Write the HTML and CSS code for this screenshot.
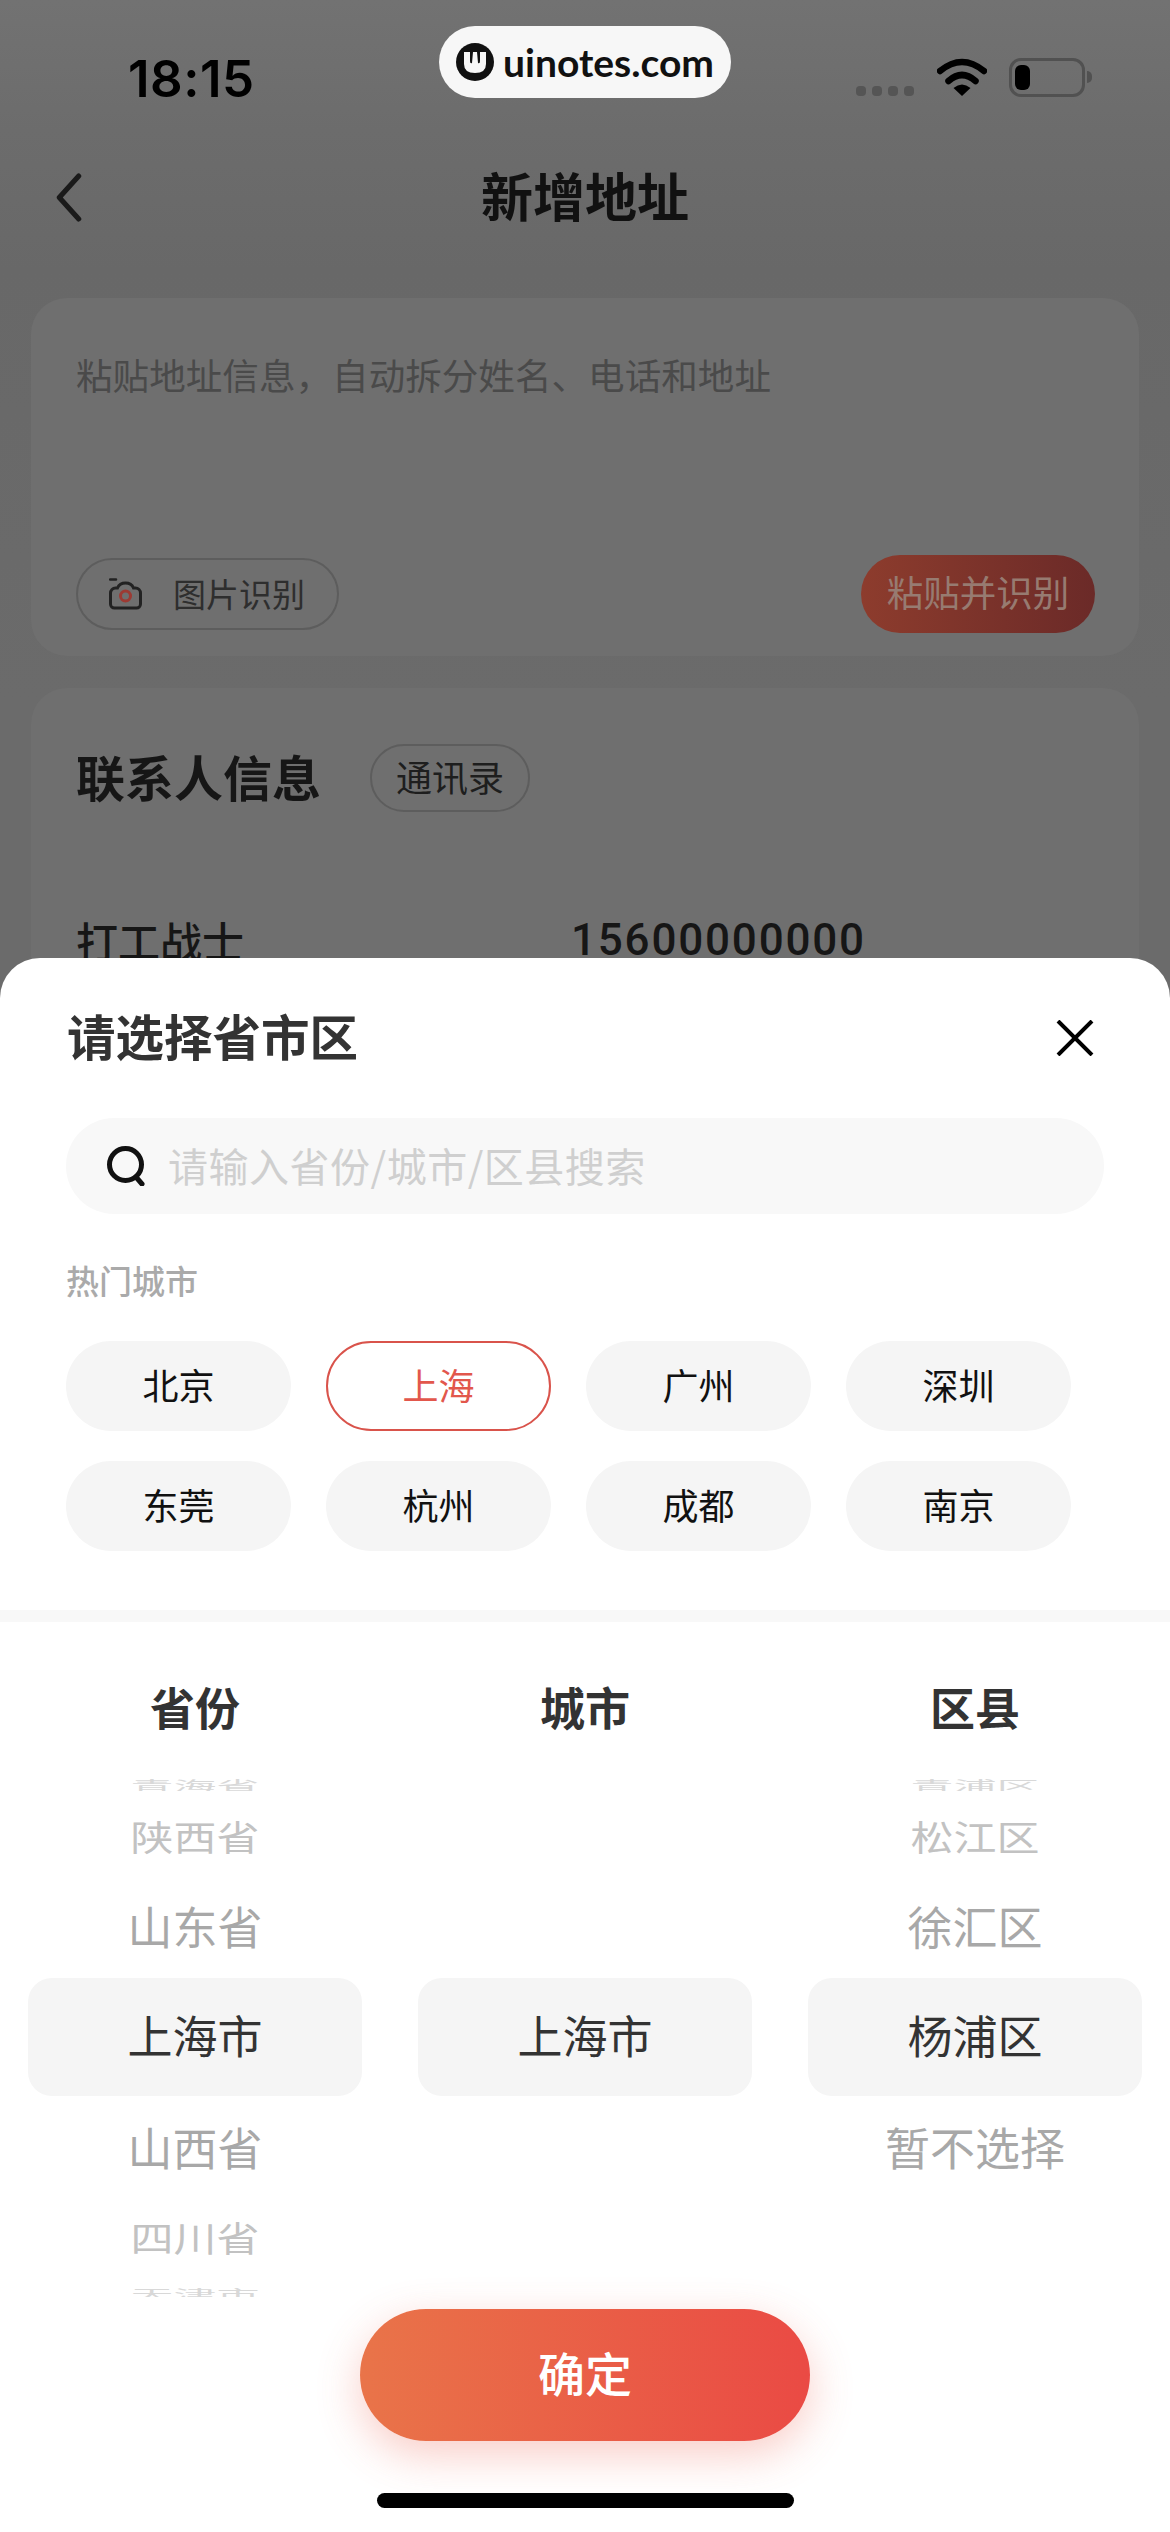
FILE: index.html
```html
<!DOCTYPE html>
<html lang="zh-CN">
<head>
    <meta charset="UTF-8">
    <meta name="viewport" content="width=device-width, initial-scale=1.0">
    <title>新增地址</title>
    <link rel="stylesheet" href="styles.css">
</head>
<body>
    <div class="page">
        <!-- Dimmed page behind the sheet -->
        <div class="status">
            <span class="time">18:15</span>
            <div class="status-icons">
                <div class="signal"><i></i><i></i><i></i><i></i></div>
                <svg class="wifi" viewBox="0 0 50 38">
                    <path d="M3 13 Q25 -5 47 13" fill="none" stroke="#000" stroke-width="6.5" stroke-linecap="round"/>
                    <path d="M11.5 23 Q25 11 38.5 23" fill="none" stroke="#000" stroke-width="6.5" stroke-linecap="round"/>
                    <path d="M16.5 30 Q25 23 33.5 30 L25 38 Z" fill="#000"/>
                </svg>
                <div class="battery"><div class="battery-level"></div></div>
                <div class="battery-nub"></div>
            </div>
        </div>

        <div class="watermark">
            <svg class="watermark-logo" viewBox="0 0 38 38">
                <circle cx="19" cy="19" r="19" fill="#111"/>
                <path d="M8 9 h6 v9 q0 3 2 2 l1 -11 h4 l1 11 q2 1 2 -2 v-9 h6 v12 q0 9 -11 9 q-11 0 -11 -9 z" fill="#f7f7f7"/>
            </svg>
            <span>uinotes.com</span>
        </div>

        <div class="nav">
            <svg class="back" viewBox="0 0 26 48">
                <path d="M23 3 L4 24 L23 45" fill="none" stroke="#1a1a1a" stroke-width="5" stroke-linecap="round" stroke-linejoin="round"/>
            </svg>
            <h1>新增地址</h1>
        </div>

        <div class="card paste-card">
            <p class="paste-hint">粘贴地址信息，自动拆分姓名、电话和地址</p>
            <div class="paste-actions">
                <div class="image-btn">
                    <svg class="camera" viewBox="0 0 33 32">
                        <path d="M1 1.5h6" fill="none" stroke="#222" stroke-width="2.5" stroke-linecap="round"/>
                        <path d="M1.5 15 a5 5 0 0 1 5 -5 h2 a8.5 7.5 0 0 1 16 0 h2 a5 5 0 0 1 5 5 v11 a4 4 0 0 1 -4 4 h-22 a4 4 0 0 1 -4 -4 z" fill="none" stroke="#222" stroke-width="3"/>
                        <circle cx="16.5" cy="18" r="5" fill="none" stroke="#9c3a33" stroke-width="3"/>
                    </svg>
                    <span>图片识别</span>
                </div>
                <div class="paste-btn">粘贴并识别</div>
            </div>
        </div>

        <div class="card contact-card">
            <div class="contact-title">
                <h2>联系人信息</h2>
                <span class="book-btn">通讯录</span>
            </div>
            <div class="contact-row">
                <span class="contact-name">打工战士</span>
                <span class="contact-phone">15600000000</span>
            </div>
        </div>

        <!-- Region picker sheet -->
        <div class="sheet">
            <div class="sheet-head">
                <h3>请选择省市区</h3>
                <svg class="close" viewBox="0 0 38 36">
                    <path d="M2 1 L36 35 M36 1 L2 35" fill="none" stroke="#000" stroke-width="4"/>
                </svg>
            </div>

            <div class="search">
                <svg class="search-icon" viewBox="0 0 38 40">
                    <circle cx="18.5" cy="18.5" r="16" fill="none" stroke="#111" stroke-width="5"/>
                    <path d="M29 31 L35 38" fill="none" stroke="#111" stroke-width="5" stroke-linecap="round"/>
                </svg>
                <span>请输入省份/城市/区县搜索</span>
            </div>

            <div class="hot-label">热门城市</div>
            <div class="hot-grid">
                <div class="chip">北京</div>
                <div class="chip chip-active">上海</div>
                <div class="chip">广州</div>
                <div class="chip">深圳</div>
                <div class="chip">东莞</div>
                <div class="chip">杭州</div>
                <div class="chip">成都</div>
                <div class="chip">南京</div>
            </div>

            <div class="divider"></div>

            <div class="picker-head">
                <div>省份</div>
                <div>城市</div>
                <div>区县</div>
            </div>

            <div class="picker">
                <div class="wheel">
                    <div class="row row-edge"><span>青海省</span></div>
                    <div class="row row-far"><span>陕西省</span></div>
                    <div class="row row-near row-up"><span>山东省</span></div>
                    <div class="row row-selected"><span>上海市</span></div>
                    <div class="row row-near"><span>山西省</span></div>
                    <div class="row row-far"><span>四川省</span></div>
                    <div class="row row-edge row-bottom"><span>天津市</span></div>
                </div>
                <div class="wheel">
                    <div class="row row-edge"></div>
                    <div class="row row-far"></div>
                    <div class="row row-near row-up"></div>
                    <div class="row row-selected"><span>上海市</span></div>
                    <div class="row row-near"></div>
                    <div class="row row-far"></div>
                    <div class="row row-edge row-bottom"></div>
                </div>
                <div class="wheel">
                    <div class="row row-edge"><span>青浦区</span></div>
                    <div class="row row-far"><span>松江区</span></div>
                    <div class="row row-near row-up"><span>徐汇区</span></div>
                    <div class="row row-selected"><span>杨浦区</span></div>
                    <div class="row row-near"><span>暂不选择</span></div>
                    <div class="row row-far"></div>
                    <div class="row row-edge row-bottom"></div>
                </div>
            </div>

            <div class="confirm">确定</div>
            <div class="home-bar"></div>
        </div>
    </div>
</body>
</html>
```

FILE: styles.css
```css
* {
    box-sizing: border-box;
}

body {
    margin: 0;
    font-family: "Noto Sans CJK SC", "Noto Sans", sans-serif;
    background-color: #696969;
}

h1, h2, h3, p {
    margin: 0;
}

.page {
    position: relative;
    width: 1170px;
    height: 2532px;
    overflow: hidden;
    padding: 0 31px;
    background: linear-gradient(#727272 0, #6c6c6c 130px, #686868 270px, #6b6b6b 700px);
}

/* Status bar */
.status {
    display: flex;
    justify-content: space-between;
    align-items: flex-start;
    height: 150px;
    padding: 54px 47px 0 97px;
}

.time {
    font-family: Inter, "Liberation Sans", sans-serif;
    font-size: 51px;
    line-height: 50px;
    font-weight: 600;
    letter-spacing: 0.5px;
    color: #000;
}

.status-icons {
    display: flex;
    align-items: flex-start;
    padding-top: 4px;
}

.signal {
    display: flex;
    gap: 6px;
    margin-top: 28px;
    margin-right: 23px;
}

.signal i {
    display: block;
    width: 10px;
    height: 10px;
    border-radius: 4px;
    background-color: #555;
}

.wifi {
    width: 50px;
    height: 38px;
    margin-right: 22px;
}

.battery {
    width: 76px;
    height: 39px;
    padding: 4px 3px;
    border: 3px solid #515151;
    border-radius: 12px;
}

.battery-level {
    width: 15px;
    height: 100%;
    border-radius: 6px;
    background-color: #000;
}

.battery-nub {
    width: 5px;
    height: 12px;
    margin: 13px 0 0 2px;
    border-radius: 0 6px 6px 0;
    background-color: #515151;
}

.watermark {
    position: absolute;
    top: 26px;
    left: 439px;
    display: flex;
    align-items: center;
    width: 292px;
    height: 72px;
    padding-left: 17px;
    border-radius: 36px;
    background-color: #f7f7f7;
    font-family: Lato, "Noto Sans", sans-serif;
    font-size: 39px;
    font-weight: 700;
    color: #111;
}

.watermark-logo {
    width: 38px;
    height: 38px;
    margin-right: 9px;
}

/* Nav */
.nav {
    position: relative;
    display: flex;
    justify-content: center;
    align-items: center;
    height: 94px;
}

.nav h1 {
    margin-bottom: 5px;
    font-size: 52px;
    line-height: 89px;
    font-weight: 700;
    color: #111;
}

.back {
    position: absolute;
    left: 24px;
    top: 23px;
    width: 27px;
    height: 49px;
}

/* Cards */
.card {
    border-radius: 36px;
    background-color: #6f6f6f;
    padding-left: 45px;
}

.paste-card {
    display: flex;
    flex-direction: column;
    justify-content: space-between;
    height: 358px;
    margin-top: 54px;
    padding: 53px 44px 23px 45px;
}

.paste-hint {
    font-size: 36.6px;
    line-height: 48px;
    color: #4a4a4a;
}

.paste-actions {
    display: flex;
    justify-content: space-between;
    align-items: center;
}

.image-btn {
    display: flex;
    align-items: center;
    width: 263px;
    height: 72px;
    padding-left: 31px;
    border: 2px solid #5d5d5d;
    border-radius: 36px;
    font-size: 33px;
    color: #2e2e2e;
}

.image-btn span {
    margin-bottom: 3px;
}

.camera {
    width: 33px;
    height: 32px;
    margin-right: 31px;
}

.paste-btn {
    width: 234px;
    height: 78px;
    border-radius: 39px;
    background: linear-gradient(90deg, #8d3c2d, #6b2a28);
    font-size: 36.5px;
    line-height: 74px;
    text-align: center;
    color: #977b71;
}

.contact-card {
    height: 500px;
    margin-top: 32px;
    padding-top: 56px;
}

.contact-title {
    display: flex;
    align-items: center;
    gap: 49px;
}

.contact-title h2 {
    margin-bottom: 4px;
    font-size: 49px;
    line-height: 64px;
    font-weight: 700;
    color: #161616;
}

.book-btn {
    width: 160px;
    height: 68px;
    border: 2px solid #5d5d5d;
    border-radius: 34px;
    font-size: 36px;
    line-height: 60px;
    text-align: center;
    color: #1e1e1e;
}

.contact-row {
    display: flex;
    margin-top: 100px;
    font-size: 42px;
    line-height: 56px;
    font-weight: 500;
    color: #161616;
}

.contact-name {
    width: 495px;
}

.contact-phone {
    font-family: Roboto, "Noto Sans", sans-serif;
    font-size: 44px;
    letter-spacing: 1.8px;
}

/* Sheet */
.sheet {
    position: absolute;
    left: 0;
    right: 0;
    top: 958px;
    bottom: 0;
    border-radius: 40px 40px 0 0;
    background-color: #fff;
}

.sheet-head {
    display: flex;
    justify-content: space-between;
    align-items: center;
    height: 160px;
    padding: 0 76px 0 67px;
}

.sheet-head h3 {
    margin-bottom: 6px;
    font-size: 48.5px;
    font-weight: 600;
    color: #333;
}

.close {
    width: 38px;
    height: 36px;
}

.search {
    display: flex;
    align-items: center;
    height: 96px;
    margin: 0 66px;
    padding-left: 41px;
    border-radius: 48px;
    background-color: #f8f8f8;
    font-size: 40px;
    letter-spacing: 0.5px;
    color: #cfcfcf;
}

.search span {
    margin-bottom: 3px;
    margin-left: -2px;
}

.search-icon {
    width: 38px;
    height: 40px;
    margin-right: 25px;
}

.hot-label {
    margin: 44px 0 0 66px;
    font-size: 33px;
    line-height: 44px;
    font-weight: 500;
    color: #aaa;
}

.hot-grid {
    display: grid;
    grid-template-columns: repeat(4, 225px);
    column-gap: 35px;
    row-gap: 30px;
    margin: 39px 0 0 66px;
}

.chip {
    height: 90px;
    border-radius: 45px;
    background-color: #f5f5f5;
    font-size: 36px;
    line-height: 86px;
    text-align: center;
    color: #111;
}

.chip-active {
    border: 2px solid #d9534b;
    background-color: #fff;
    line-height: 82px;
    color: #e2574c;
}

.divider {
    height: 12px;
    margin-top: 59px;
    background-color: #f8f8f8;
}

.picker-head {
    display: grid;
    grid-template-columns: repeat(3, 334px);
    column-gap: 56px;
    padding: 55px 28px 0;
    font-size: 45px;
    line-height: 60px;
    font-weight: 700;
    text-align: center;
    color: #333;
}

.picker {
    display: grid;
    grid-template-columns: repeat(3, 334px);
    column-gap: 56px;
    margin-top: 40px;
    padding: 0 28px;
}

.wheel {
    display: grid;
    grid-template-rows: 14px 92px 95px 118px 106px 72px 23px;
    text-align: center;
}

.row {
    display: flex;
    justify-content: center;
    align-items: center;
    overflow: hidden;
    white-space: nowrap;
}

.row span {
    display: block;
    margin-bottom: 5px;
}

.row-near {
    font-size: 45px;
    color: #a8a8a8;
}

.row-up {
    padding-bottom: 6px;
}

.row-far {
    font-size: 43px;
    color: #c2c2c2;
}

.row-far span {
    transform: scaleY(0.82);
}

.row-edge {
    font-size: 43px;
    color: #d8d8d8;
}

.row-edge span {
    margin-bottom: 0;
    transform: scaleY(0.3);
}

.row-bottom {
    padding-top: 14px;
}

.row-selected {
    border-radius: 24px;
    background-color: #f5f5f5;
    font-size: 45px;
    color: #333;
}

.confirm {
    width: 450px;
    height: 132px;
    margin: 12px auto 0;
    border-radius: 66px;
    background: linear-gradient(90deg, #e97449, #ea4a44);
    box-shadow: 0 14px 44px rgba(234, 90, 70, 0.3);
    font-size: 47px;
    line-height: 126px;
    font-weight: 500;
    text-align: center;
    color: #fff;
}

.home-bar {
    width: 417px;
    height: 15px;
    margin: 52px auto 0;
    border-radius: 8px;
    background-color: #000;
}
```
